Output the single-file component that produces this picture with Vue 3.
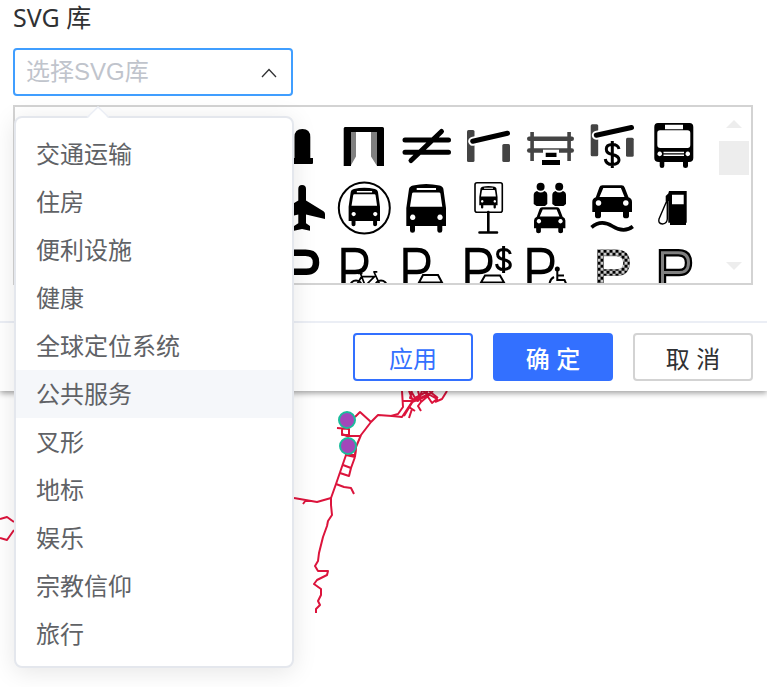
<script setup>
import { ref } from 'vue'

const open = ref(true)
const library = ref('')
const hovered = ref('公共服务')
const libraries = ['交通运输', '住房', '便利设施', '健康', '全球定位系统', '公共服务', '叉形', '地标', '娱乐', '宗教信仰', '旅行']

const bus = `<path fill-rule="evenodd" d="M11.3 49V31L14 12Q14.400 9.500 18 8.500Q31 5.500 44.500 8.500Q48 9.500 48.400 12L51 31V49H47.300V53.500Q47.300 55.700 44.800 55.700T42.300 53.500V49H20V53.500Q20 55.700 17.500 55.700T15 53.500V49ZM21.700 11V13H41V11ZM18.500 15.400Q17.300 15.400 17.100 16.500L15 29.700H47.300L45.400 16.500Q45.200 15.400 44 15.400ZM17.700 37.600a2.700 2.700 0 1 0 .01 0ZM45 37.600a2.700 2.700 0 1 0 .01 0Z"/>`
const car = `<path fill-rule="evenodd" d="M11.300 35V25Q11.300 21.500 14.800 20.300L18.300 10.500Q19 8.300 21.500 8.300H40.500Q43 8.300 43.700 10.500L47.500 20.300Q51 21.500 51 25V35H48V39Q48 41.300 45 41.300T42 39V35H20V39Q20 41.300 17 41.300T14 39V35ZM22.300 11L18.500 20H43.500L39.900 11ZM17.500 23.200a2.800 2.800 0 1 0 .01 0ZM44.800 23.200a2.800 2.800 0 1 0 .01 0Z"/>`
const thinP = '<path d="M10.500 62V11H22Q33.300 11 33.300 22T22 33H10.500" fill="none" stroke="#000" stroke-width="4.400"/>'
const dollar = '<path d="M38 34Q37 29.500 31.300 29.500Q25.300 29.500 25.300 34T31.300 39.500Q38 41 38 45T31.300 49.500Q24.800 49.500 24.300 44M31.300 26V53" fill="none" stroke="#000" stroke-width="3"/>'
const boldP = 'M19.500 62V13.800H35.500Q45.500 13.800 45.500 23.800T35.500 33.500H19.500'

const icons = [
  { name: 'bollard', body: '<path d="M23.500 22Q23.500 14 31.400 14T39.300 22V43H42V48Q42 49 41 49H21V43H23.500Z"/>' },
  { name: 'gate', body: '<path fill="#808080" d="M17.500 16H23V41.500L17.500 51ZM38 16H44V51L38 41.500Z"/><path d="M12 12H49.500Q51 12 51 13.500V51H44V17H18V51H10.700V13.500Q10.700 12 12 12Z"/>' },
  { name: 'cattle-grid', body: '<path d="M10 25H53.500M10 37.300H53.500M16 45.500L46.500 16.500" fill="none" stroke="#000" stroke-width="5" stroke-linecap="round"/>' },
  { name: 'lift-gate', body: '<g fill="#444"><rect x="10" y="15" width="7.500" height="32" rx="1.500"/><rect x="45.300" y="29" width="7.700" height="18" rx="1.500"/></g><path d="M15.700 26.300L51 18" stroke="#fff" stroke-width="9" stroke-linecap="round"/><path d="M15.700 26.300L50.500 18.300" stroke="#000" stroke-width="5" stroke-linecap="round"/>' },
  { name: 'stile', body: '<g fill="#444"><rect x="11.300" y="17" width="3.600" height="29"/><rect x="48.300" y="17" width="3.600" height="29"/><rect x="8" y="21.500" width="47" height="4.500" rx="2.200"/><rect x="8" y="33.200" width="47" height="4.500" rx="2.200"/></g><path fill="#fff" d="M24 34.700H40V44H24Z"/><path d="M26.700 37.700H37.500V42H26.700ZM23 45H41V50H23Z"/>' },
  { name: 'toll-gate', body: '<g fill="#444"><rect x="9.700" y="9.300" width="7.500" height="32" rx="1.500"/><rect x="45" y="22.700" width="7.700" height="19" rx="1.500"/></g><path d="M15.300 20.300L51 12.300" stroke="#fff" stroke-width="9" stroke-linecap="round"/><path d="M15.300 20.300L50.500 12.500" stroke="#000" stroke-width="5" stroke-linecap="round"/>' + dollar },
  { name: 'coach', body: '<path fill-rule="evenodd" d="M15 8H46.500Q50.300 8 50.300 12V43Q50.300 47 46 47H45V51Q45 53 42.500 53T40 51V47H21.300V51Q21.300 53 19 53T16.700 51V47H16Q11.300 47 11.300 43V12Q11.300 8 15 8ZM22 9.700V14.300H40V9.700ZM17 15.300Q14.300 15.300 14.300 18V30Q14.300 33 17.300 33H44.500Q47.300 33 47.300 30V18Q47.300 15.300 44.500 15.300ZM16.700 36.600a2.300 2.300 0 1 0 .01 0ZM44.800 36.600a2.300 2.300 0 1 0 .01 0ZM20.500 36.700V38.200H41V36.700ZM20.500 39.500V41H41V39.500Z"/>' },

  { name: 'airport', body: '<path d="M31 8Q35 8 35 12V23.500L52.500 34.300Q54 35.300 54 37V42L35 37.500V46.300L39 49V53.700L31 52L23 53.700V49L27.300 46.300V37.500L8 42V37Q8 35.300 9.500 34.300L27.300 23.500V12Q27.300 8 31 8Z"/>' },
  { name: 'bus-station', body: '<circle cx="31.300" cy="31" r="25.500" fill="none" stroke="#000" stroke-width="2"/><g transform="translate(6.700 5.200) scale(.79)">' + bus + '</g>' },
  { name: 'bus', body: bus },
  { name: 'bus-stop', body: '<rect x="18" y="5.700" width="27.300" height="29.500" rx="2" fill="none" stroke="#000" stroke-width="1.600"/><g transform="translate(17.100 5.800) scale(.46)">' + bus + '</g><path d="M31.300 35V55M22.500 55.500H40" stroke="#000" stroke-width="2.600" stroke-linecap="round"/>' },
  { name: 'car-share', body: '<circle cx="21.600" cy="9.700" r="4"/><circle cx="40.200" cy="9.700" r="4"/><path d="M18 14Q21.600 17 25.500 14Q28.300 15 28.300 18V27L26 29H17.500L14.700 27V18Q14.700 15 18 14ZM36.500 14Q40.200 17 44 14Q47 15 47 18V27L44.500 29H36L33.300 27V18Q33.300 15 36.500 14Z"/><g transform="translate(6.100 23.700) scale(.79)">' + car + '</g>' },
  { name: 'ford', body: car + '<path d="M10.500 50.300Q20 42 31.500 49.200T51.800 49.500" fill="none" stroke="#000" stroke-width="3.600"/>' },
  { name: 'fuel', body: '<path fill-rule="evenodd" d="M26 14H43.700V45.700H43V48H27V45.700H25.300V24H22.700V19L25.300 16.500ZM29 17.700V27.300H40.700V17.700Z"/><path d="M23.700 24L16 42Q14.800 46.500 19.500 47Q24 46.500 24.300 42V24" fill="none" stroke="#000" stroke-width="1.400"/>' },

  { name: 'parking', body: '<path d="M17 62V13.800H34.500Q45 13.800 45 23.500T34.500 32.800H17" fill="none" stroke="#000" stroke-width="6.500"/>' },
  { name: 'bicycle-parking', body: thinP + '<path d="M25 34.300H29.500M27.500 34.500L31.500 45H34L41.500 37.700H28.500L23 47M40.300 32.800H44.300M41 33L47.500 47" fill="none" stroke="#000" stroke-width="1.700"/><g fill="none" stroke="#000" stroke-width="1.800"><circle cx="23" cy="47.500" r="6"/><circle cx="48" cy="47.500" r="6"/></g>' },
  { name: 'car-parking', body: thinP + '<path d="M24 43.500L28 36H43L47 43.500ZM24 44V52H47V44" fill="none" stroke="#000" stroke-width="2"/>' },
  { name: 'paid-parking', body: thinP + '<g transform="translate(15.300 -19)">' + dollar + '</g><path d="M24 43.500L28 36.500H43L47 43.500ZM24 44V52H47V44" fill="none" stroke="#000" stroke-width="2"/>' },
  { name: 'disabled-parking', body: thinP + '<circle cx="38.300" cy="30" r="2.500"/><path d="M38.300 31V41H45.500L48.500 48M38.300 36.500H45M35 38Q31 40 30.500 45" fill="none" stroke="#000" stroke-width="2"/>' },
  { name: 'private-parking', body: '<defs><pattern id="checks" x="16.500" y="10.700" width="6" height="6" patternUnits="userSpaceOnUse"><rect width="6" height="6" fill="#ccc"/><path d="M0 0H3V3H0ZM3 3H6V6H3Z"/></pattern></defs><path d="' + boldP + '" fill="none" stroke="#777" stroke-width="6.800"/><path d="' + boldP + '" fill="none" stroke="url(#checks)" stroke-width="6.200"/>' },
  { name: 'restricted-parking', body: '<path d="' + boldP + '" fill="none" stroke="#000" stroke-width="7.400"/><path d="' + boldP + '" fill="none" stroke="#808080" stroke-width="3"/>' },
]

function choose(item) {
  library.value = item
  open.value = false
}
</script>

<template>
  <main class="page">
    <section class="dialog">
      <div class="content">
        <label class="title" for="library">SVG 库</label>
        <div class="select">
          <input id="library" class="select-input" type="text" readonly role="combobox" aria-controls="library-list" :aria-expanded="open" :value="library" placeholder="选择SVG库" @click="open = !open" />
          <svg class="chevron" viewBox="0 0 16 10" aria-hidden="true"><path d="M1 9L8 1.500L15 9" /></svg>
          <div v-if="open" class="dropdown">
            <svg class="arrow" viewBox="0 0 24 13" aria-hidden="true"><path class="arrow-fill" d="M1 13L12 1L23 13Z" /><path class="arrow-line" d="M1 11.500L12 1L23 11.500" /></svg>
            <ul id="library-list" class="options" role="listbox">
              <li v-for="item in libraries" :key="item" class="option" :class="{ hovered: item === hovered }" role="option" :aria-selected="item === library" @mouseenter="hovered = item" @click="choose(item)">{{ item }}</li>
            </ul>
          </div>
        </div>
        <div class="gallery">
          <div class="icon-grid">
            <button v-for="icon in icons" :key="icon.name" class="icon" type="button" :aria-label="icon.name">
              <svg viewBox="0 0 62 62" v-html="icon.body"></svg>
            </button>
          </div>
          <div class="scrollbar" aria-hidden="true">
            <span class="step"><svg viewBox="0 0 16 8"><path d="M0 8L8 0L16 8Z" /></svg></span>
            <span class="thumb"></span>
            <span class="step last"><svg viewBox="0 0 16 8"><path d="M0 0H16L8 8Z" /></svg></span>
          </div>
        </div>
      </div>
      <footer class="footer">
        <button class="btn outline" type="button">应用</button>
        <button class="btn primary" type="button">确 定</button>
        <button class="btn" type="button">取 消</button>
      </footer>
    </section>
    <section class="map">
      <svg class="network" viewBox="0 391 767 296" aria-hidden="true">
        <g class="roads">
          <path d="M294 498L317 502L331 498V505L332 515L328 521L327 526L323 537L319 553L318 561L315 566L318 571H328L327 575L317 580L314 584L321 589V595L318 601L320 605L316 609V613M306 500L303 504" />
          <path d="M331 498L336 484L346 455L355 457M345 455H355L356 447L361 435L371 422L378 415L392 416L402 417L412 402L427 396" />
          <path d="M371 422L360 412L355 417M337 428L349 429V435H342V429M342 434L347 436H361M355 457L356 447M343 465L351 468L355 457M340 473L349 476L351 468M336 484L344 487L351 488L354 494" />
          <path d="M391 416L398 414L403 407L402 391M402 401H412L420 398L432 393M409 391L413 401L404 416M412 391L410 398L418 401L422 391M418 391L421 402L428 396L433 391M409 407L415 411M412 409L409 418M421 402L418 406L421 411M411 391L415 398L428 391M423 391L437 399L432 403L424 391M429 391L438 398M435 402L442 399L447 391" />
          <path d="M0 519L7 517L14 522M0 538L7 540L14 530" />
        </g>
        <g class="stations"><circle cx="347" cy="420" r="8" /><circle cx="348" cy="446" r="8" /></g>
      </svg>
    </section>
  </main>
</template>

<style>
body {
  margin: 0;
  background: #fff;
}
</style>

<style scoped>
* {
  box-sizing: border-box;
}
.page {
  display: flex;
  flex-direction: column;
  min-height: 100vh;
  font-family: "Liberation Sans", "Noto Sans CJK SC", sans-serif;
  font-size: 24px;
  color: #303133;
  overflow: hidden;
}
.dialog {
  position: relative;
  z-index: 1;
  background: #fff;
  box-shadow: 0 2px 6px rgba(0, 0, 0, 0.4);
}
.content {
  padding: 0 14px 36px 13px;
}
.title {
  display: block;
  height: 48px;
  line-height: 34px;
  font-family: "Noto Sans", "Noto Sans CJK SC", sans-serif;
  font-size: 25px;
}
.select {
  position: relative;
  width: 280px;
}
.select-input {
  display: block;
  width: 100%;
  height: 48px;
  padding: 0 48px 0 11px;
  border: 2px solid #409eff;
  border-radius: 4px;
  background: #fff;
  color: #606266;
  font: inherit;
  outline: none;
  cursor: pointer;
}
.select-input::placeholder {
  color: #c0c4cc;
  opacity: 1;
}
.chevron {
  position: absolute;
  top: 20px;
  right: 16px;
  width: 16px;
  height: 10px;
  fill: none;
  stroke: #303133;
  stroke-width: 1.3;
  pointer-events: none;
}
.dropdown {
  position: absolute;
  z-index: 2;
  top: 68px;
  left: 1px;
  width: 100%;
  padding: 12px 0 8px;
  border: 2px solid #e4e7ed;
  border-radius: 8px;
  background: #fff;
  box-shadow: 0 4px 24px rgba(0, 0, 0, 0.1);
}
.arrow {
  position: absolute;
  top: -12px;
  left: 70px;
  width: 24px;
  height: 13px;
}
.arrow-fill {
  fill: #fff;
}
.arrow-line {
  fill: none;
  stroke: #ebeef5;
  stroke-width: 1.5;
}
.options {
  margin: 0;
  padding: 0;
  list-style: none;
}
.option {
  height: 48px;
  padding: 0 20px;
  line-height: 50px;
  color: #606266;
  cursor: pointer;
}
.option.hovered {
  background: #f5f7fa;
}
.gallery {
  display: flex;
  justify-content: flex-end;
  gap: 14px;
  height: 180px;
  margin-top: 9px;
  padding-right: 2px;
  border: 2px solid #d3d3d3;
  overflow: hidden;
}
.icon-grid {
  display: grid;
  grid-template-columns: repeat(7, 62px);
  grid-auto-rows: 62px;
  padding-top: 8px;
}
.icon {
  padding: 0;
  border: 0;
  background: none;
  cursor: pointer;
}
.icon svg {
  display: block;
  width: 62px;
  height: 62px;
}
.scrollbar {
  display: flex;
  flex-direction: column;
  width: 30px;
}
.step {
  display: flex;
  align-items: center;
  justify-content: center;
  height: 34px;
}
.step.last {
  margin-top: auto;
}
.step svg {
  width: 16px;
  height: 8px;
  fill: #ededed;
}
.thumb {
  height: 34px;
  background: #ededed;
}
.footer {
  display: flex;
  justify-content: flex-end;
  gap: 20px;
  padding: 10px 14px;
  border-top: 2px solid #ebeef5;
}
.btn {
  width: 120px;
  height: 48px;
  padding: 0;
  border: 2px solid #d3d3d3;
  border-radius: 4px;
  background: #fff;
  color: #303133;
  font: inherit;
  cursor: pointer;
}
.btn.outline {
  border-color: #3370ff;
  color: #3370ff;
}
.btn.primary {
  border-color: #3370ff;
  background: #3370ff;
  color: #fff;
  font-weight: 500;
}
.map {
  flex: 1;
}
.network {
  display: block;
  width: 767px;
  height: 296px;
}
.roads {
  fill: none;
  stroke: #dc143c;
  stroke-width: 2;
  stroke-linejoin: round;
}
.stations {
  fill: #a347ba;
  stroke: #1abc9c;
  stroke-width: 2;
}
</style>
